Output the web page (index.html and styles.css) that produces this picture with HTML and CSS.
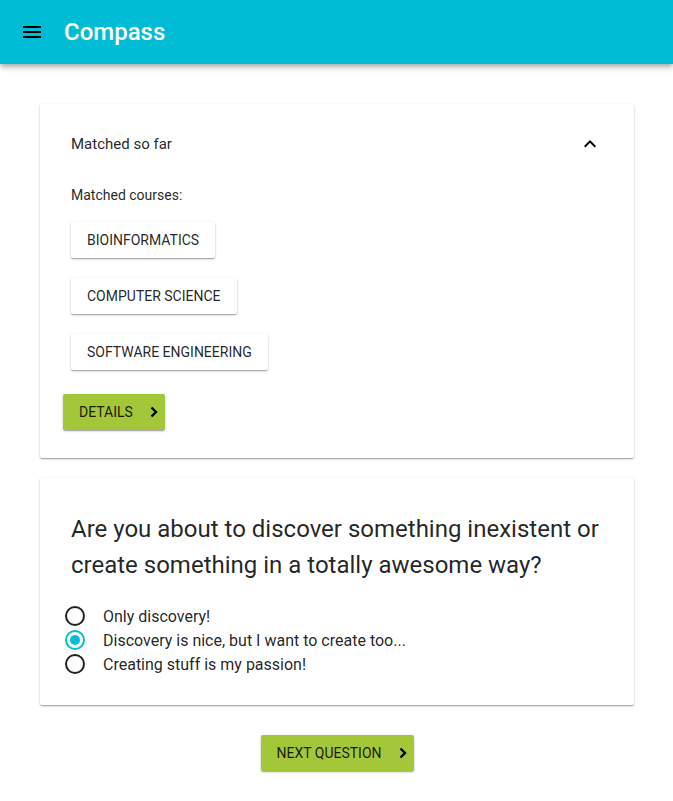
FILE: index.html
```html
<!DOCTYPE html>
<html>
<head>
<meta charset="utf-8">
<link rel="stylesheet" href="styles.css">
</head>
<body>
<header class="toolbar">
  <svg class="menu-icon" width="24" height="24" viewBox="0 0 24 24"><path d="M3 18h18v-2H3v2zm0-5h18v-2H3v2zm0-7v2h18V6H3z" fill="#000"/></svg>
  <span class="title">Compass</span>
</header>
<main class="content">
  <section class="card matched">
    <div class="panel-head">
      <span class="panel-title">Matched so far</span>
      <svg class="chev-up" width="24" height="24" viewBox="0 0 24 24"><path d="M7.41 15.41L12 10.83l4.59 4.58L18 14l-6-6-6 6z" fill="#000"/></svg>
    </div>
    <div class="panel-body">
      <p class="label">Matched courses:</p>
      <div class="chips">
        <button class="chip">BIOINFORMATICS</button>
        <button class="chip">COMPUTER SCIENCE</button>
        <button class="chip">SOFTWARE ENGINEERING</button>
      </div>
      <button class="green-btn details">DETAILS <svg width="12" height="14" viewBox="0 0 12 14"><path d="M3.5 2.5L8 7l-4.5 4.5" fill="none" stroke="#000" stroke-width="2.4"/></svg></button>
    </div>
  </section>
  <section class="card question">
    <h2 class="q-text">Are you about to discover something inexistent or create something in a totally awesome way?</h2>
    <div class="options">
      <label class="opt"><span class="radio"></span>Only discovery!</label>
      <label class="opt"><span class="radio checked"></span>Discovery is nice, but I want to create too...</label>
      <label class="opt"><span class="radio"></span>Creating stuff is my passion!</label>
    </div>
  </section>
  <div class="next-wrap">
    <button class="green-btn next">NEXT QUESTION <svg width="12" height="14" viewBox="0 0 12 14"><path d="M3.5 2.5L8 7l-4.5 4.5" fill="none" stroke="#000" stroke-width="2.4"/></svg></button>
  </div>
</main>
</body>
</html>
```

FILE: styles.css
```css
* { box-sizing: border-box; }
html, body {
  margin: 0;
  padding: 0;
  background: #fff;
  font-family: Roboto, "Liberation Sans", sans-serif;
  color: rgba(0,0,0,0.87);
}
.toolbar {
  height: 64px;
  background: #00bcd4;
  display: flex;
  align-items: center;
  padding: 0 20px;
  box-shadow: 0 2px 4px -1px rgba(0,0,0,.2), 0 4px 5px 0 rgba(0,0,0,.14), 0 1px 10px 0 rgba(0,0,0,.12);
  position: relative;
  z-index: 2;
}
.menu-icon { display: block; }
.title {
  color: #fff;
  font-size: 24px;
  font-weight: 500;
  margin-left: 20px;
  margin-top: 0;
}
.content {
  padding: 40px 39px 30px 40px;
}
.card {
  background: #fff;
  border-radius: 2px;
  box-shadow: 0 1px 3px 0 rgba(0,0,0,.2), 0 1px 1px 0 rgba(0,0,0,.14), 0 2px 1px -1px rgba(0,0,0,.12);
}
.matched {
  padding: 0 0 28px 0;
}
.panel-head {
  height: 80px;
  display: flex;
  align-items: center;
  justify-content: space-between;
  padding: 0 32px 0 31px;
}
.panel-title { font-size: 15px; }
.panel-body {
  padding: 0 0 0 23px;
}
.label {
  font-size: 14px;
  margin: 1px 0 0 8px;
  line-height: 20px;
}
.chips {
  display: flex;
  flex-direction: column;
  align-items: flex-start;
  gap: 20px;
  margin: 17px 0 0 8px;
}
.chip {
  height: 36px;
  padding: 0 16px;
  border: none;
  background: #fff;
  border-radius: 2px;
  font-family: Roboto, "Liberation Sans", sans-serif;
  font-size: 14px;
  color: rgba(0,0,0,0.87);
  box-shadow: 0 1px 3px 0 rgba(0,0,0,.2), 0 1px 1px 0 rgba(0,0,0,.14), 0 2px 1px -1px rgba(0,0,0,.12);
}
.green-btn {
  height: 36px;
  display: inline-flex;
  align-items: center;
  justify-content: space-between;
  white-space: nowrap;
  border: none;
  border-radius: 2px;
  background: #a4c639;
  font-family: Roboto, "Liberation Sans", sans-serif;
  font-size: 14px;
  color: rgba(0,0,0,0.87);
  box-shadow: 0 1px 3px 0 rgba(0,0,0,.2), 0 1px 1px 0 rgba(0,0,0,.14), 0 2px 1px -1px rgba(0,0,0,.12);
  padding: 0 5px 0 16px;
}
.green-btn svg { display: block; }
.details {
  margin-top: 24px;
  width: 102px;
}
.question {
  margin-top: 20px;
  padding: 33px 31px 29px 31px;
}
.q-text {
  margin: 0;
  font-size: 24px;
  font-weight: 400;
  line-height: 36px;
}
.options {
  margin-top: 21px;
  display: flex;
  flex-direction: column;
}
.opt {
  display: flex;
  align-items: center;
  height: 24px;
  font-size: 16px;
}
.radio {
  width: 20px;
  height: 20px;
  border: 2px solid rgba(0,0,0,0.87);
  border-radius: 50%;
  margin-left: -6px;
  margin-right: 18px;
  position: relative;
  flex: none;
}
.radio.checked { border-color: #00bcd4; }
.radio.checked::after {
  content: "";
  position: absolute;
  left: 3px; top: 3px;
  width: 10px; height: 10px;
  border-radius: 50%;
  background: #00bcd4;
}
.next-wrap {
  display: flex;
  justify-content: center;
  margin-top: 30px;
}
.next { width: 153px; }
```
